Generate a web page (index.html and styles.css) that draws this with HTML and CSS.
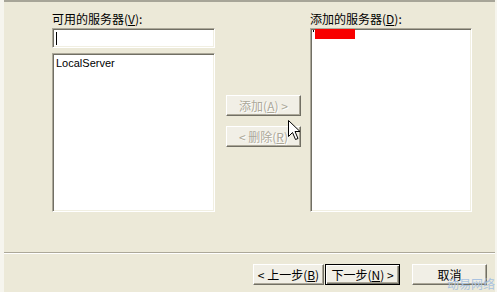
FILE: index.html
```html
<!DOCTYPE html>
<html>

<head>
  <meta name="viewport" content="width=device-width, initial-scale=1">
  <link rel="stylesheet" href="styles.css">
</head>

<body>

  <div class="frame">
    <div class="panes">
      <div class="col left">
        <label class="caption">可用的服务器(<u>V</u>):</label>
        <div class="field"><span class="caret"></span></div>
        <div class="list avail">
          <div class="item">LocalServer</div>
        </div>
      </div>

      <div class="col middle">
        <button class="btn" disabled>添加(<u>A</u>) &gt;</button>
        <button class="btn" disabled>&lt; 删除(<u>R</u>)</button>
      </div>

      <div class="col right">
        <label class="caption">添加的服务器(<u>D</u>):</label>
        <div class="list added">
          <div class="picked"><span class="dot"></span><span class="redbar"></span></div>
        </div>
      </div>
    </div>

    <hr class="sep">

    <div class="footer">
      <button class="btn back">&lt; 上一步(<u>B</u>)</button>
      <button class="btn next">下一步(<u>N</u>) &gt;</button>
      <button class="btn cancel">取消</button>
    </div>

    <!-- mouse pointer over the remove button -->
    <svg class="pointer" width="13" height="21" viewBox="0 0 13 21">
      <path d="M0.5 0.5 L0.5 16.5 L4.5 12.5 L7.5 19.5 L10 18.5 L7 11.5 L12 11.5 Z" fill="#fff" stroke="#000" stroke-width="1" stroke-linejoin="miter"/>
    </svg>

    <div class="mark">动易网络</div>
  </div>

</body>

</html>
```

FILE: styles.css
```css
body {
  margin: 0;
  background-color: #f6f5ee;
  font-family: "Noto Sans CJK SC", "Liberation Sans", sans-serif;
  font-size: 12px;
  color: #000;
}

* {
  box-sizing: border-box;
}

/* Dialog face */
.frame {
  position: relative;
  width: 491px;
  height: 292px;
  margin-left: 4px;
  background-color: #ece9d8;
  border-top: 2px solid #a7a598;
}

/* The three columns: available list, move buttons, added list */
.panes {
  display: flex;
  padding-top: 9px;
  padding-left: 48px;
  height: 210px;
}

.col {
  display: flex;
  flex-direction: column;
}

.left {
  width: 163px;
}

.middle {
  width: 95px;
  padding-top: 84px;
  padding-left: 11px;
  gap: 10px;
}

.right {
  width: 162px;
}

.caption {
  display: block;
  height: 16px;
  line-height: 16px;
  margin-bottom: 1px;
  white-space: nowrap;
}

/* Sunken white boxes */
.field,
.list {
  background-color: #fff;
  border: 1px solid;
  border-color: #aca899 #fff #fff #aca899;
  box-shadow: inset 1px 1px #716f64, inset -1px -1px #f1efe2;
}

.field {
  height: 20px;
  margin-bottom: 5px;
  padding: 3px 0 0 3px;
}

.caret {
  display: block;
  width: 1px;
  height: 13px;
  background-color: #000;
}

.avail {
  height: 159px;
}

.added {
  height: 184px;
}

.item {
  font-family: "Liberation Sans", Arial, sans-serif;
  font-size: 11px;
  line-height: 13px;
  padding: 3px 0 0 3px;
}

.picked {
  display: flex;
  align-items: flex-start;
  padding: 0 0 0 2px;
}

.dot {
  width: 1px;
  height: 2px;
  margin-top: 1px;
  background-color: #000;
}

.redbar {
  width: 40px;
  height: 10px;
  margin-left: 1px;
  background-color: #f80000;
}

/* Classic raised buttons */
.btn {
  height: 21px;
  width: 75px;
  padding: 0;
  font-family: "Noto Sans CJK SC", "Liberation Sans", sans-serif;
  font-size: 12px;
  line-height: 17px;
  color: #000;
  background-color: #f1efe6;
  border: 1px solid;
  border-color: #fff #716f64 #716f64 #fff;
  box-shadow: inset -1px -1px #aca899;
  white-space: nowrap;
}

.btn:disabled {
  color: #aca899;
  text-shadow: 1px 1px #fff;
}

.sep {
  margin: 40px 0 0 0;
  height: 2px;
  border: none;
  border-top: 1px solid #aca899;
  border-bottom: 1px solid #fff;
}

.footer {
  display: flex;
  padding-top: 10px;
  padding-left: 249px;
}

.back {
  width: 71px;
}

.next {
  margin-left: 1px;
  border: 1px solid #000;
  box-shadow: inset 1px 1px #fff, inset -1px -1px #716f64, inset -2px -2px #aca899;
}

.cancel {
  margin-left: 12px;
}

/* Overlays */
.pointer {
  position: absolute;
  left: 284px;
  top: 118px;
}

.mark {
  position: absolute;
  left: 443px;
  top: 275px;
  font-size: 12px;
  line-height: 14px;
  color: #a9c2e0;
  white-space: nowrap;
}
```
